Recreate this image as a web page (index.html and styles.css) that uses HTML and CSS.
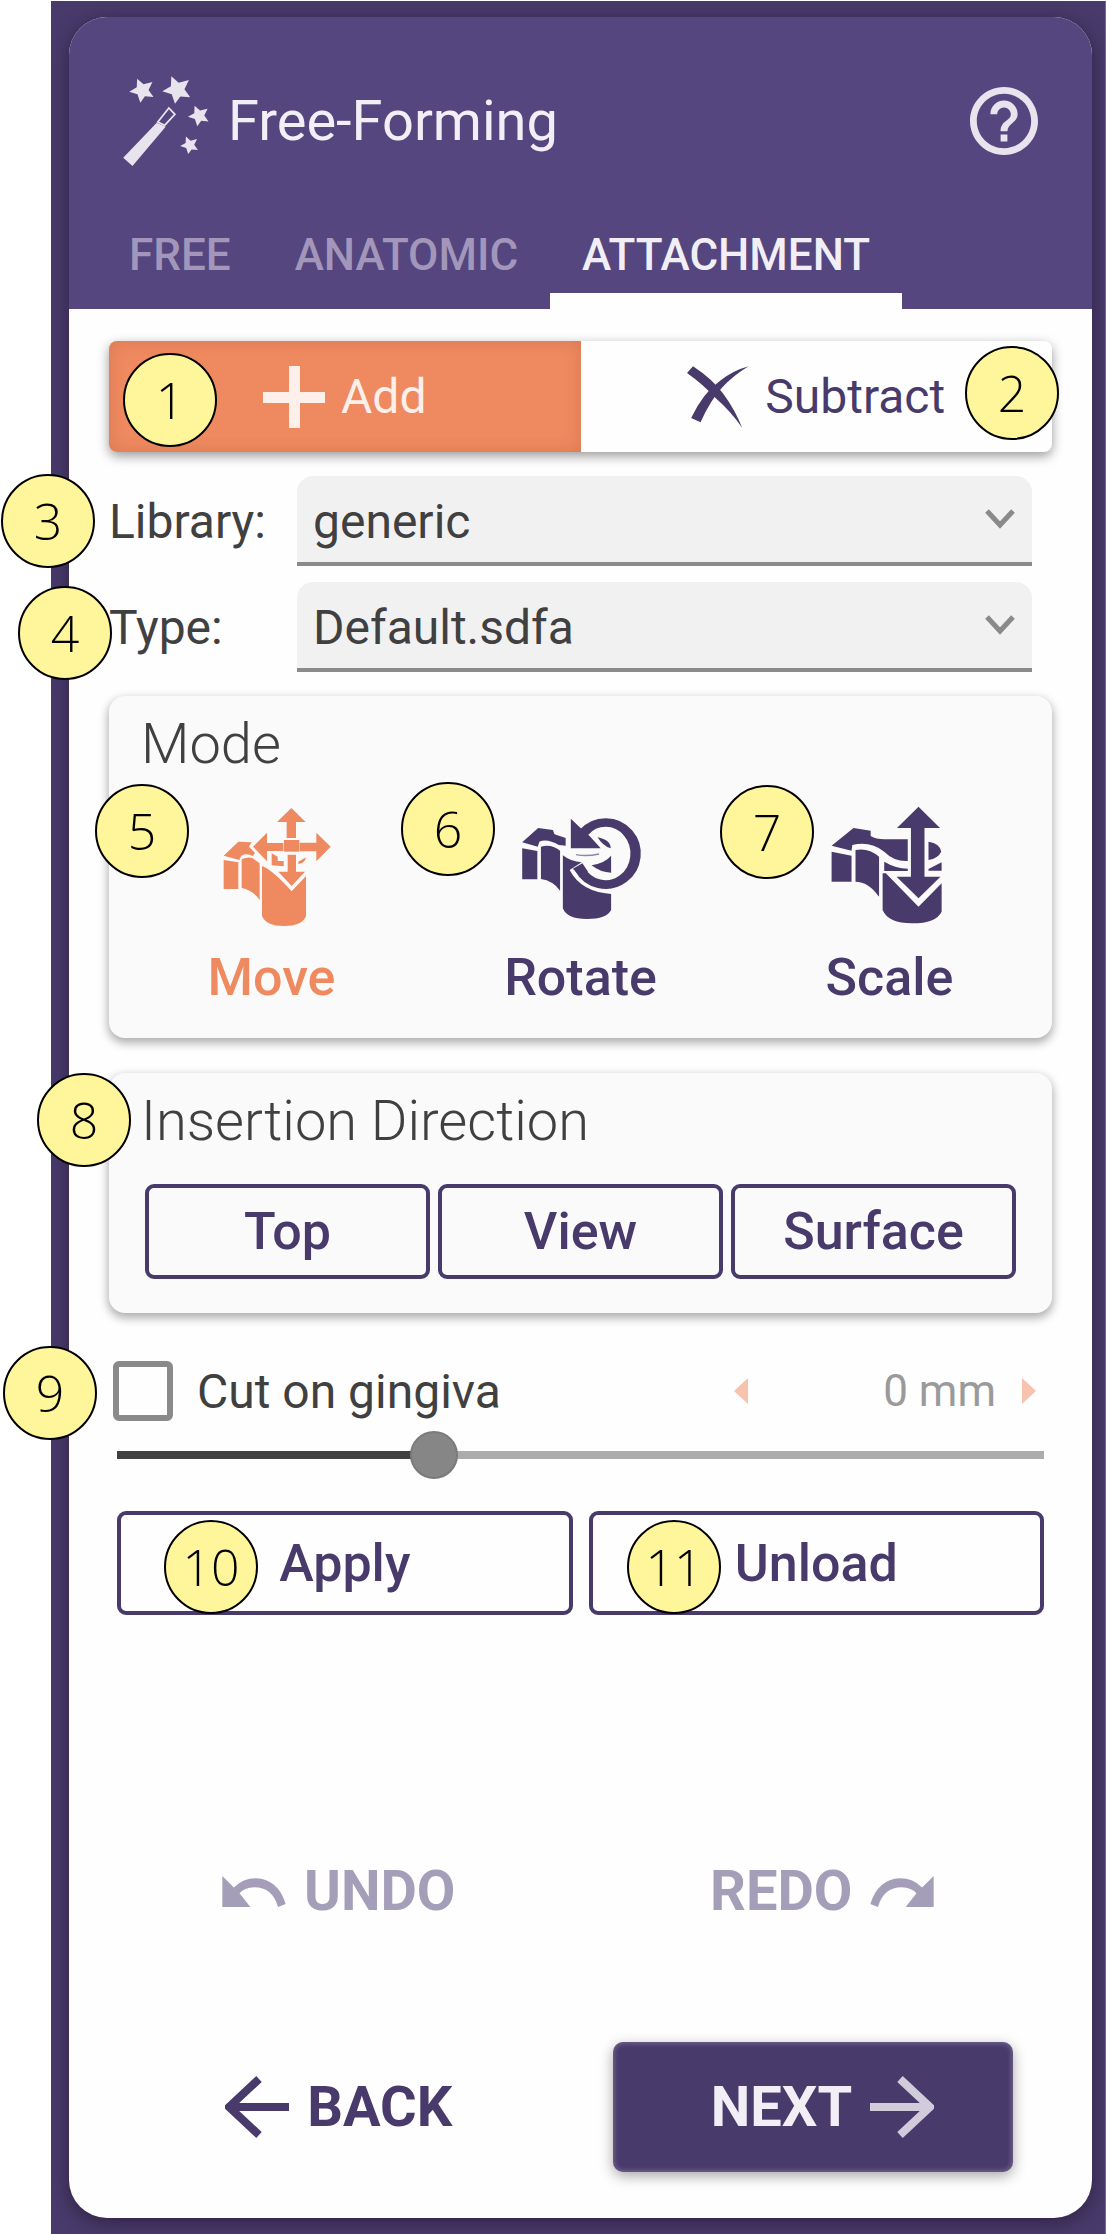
FILE: index.html
```
<!DOCTYPE html>
<html lang="en">
<head>
    <meta charset="UTF-8">
    <meta name="viewport" content="width=device-width, initial-scale=1.0">
    <title>Free-Forming</title>
    <link rel="stylesheet" href="styles.css">
</head>
<body>
    <div class="stage">
        <div class="panel">
            <header class="header">
                <div class="title-row">
                    <svg class="wand" viewBox="336 225 258 276" preserveAspectRatio="none" aria-hidden="true">
                        <defs>
                            <path id="star" d="M-14-36L4-19L29-26L18-2L32 19L8 17L-5 36L-13 11L-36 3L-15-10Z"/>
                        </defs>
                        <use href="#star" transform="translate(398 272)"/>
                        <use href="#star" transform="translate(496 270) scale(1.15)"/>
                        <use href="#star" transform="translate(557 348) scale(.85)"/>
                        <use href="#star" transform="translate(531 436) scale(.73)"/>
                        <path d="M345 473L439 368L464 380L371 498Z"/>
                        <path d="M473 324L490 343L461 376L442 366Z" fill="none" stroke="currentColor" stroke-width="5"/>
                    </svg>
                    <h1>Free-Forming</h1>
                    <button class="help" aria-label="Help">
                        <svg viewBox="2 2 20 20"><path d="M11 18h2v-2h-2v2zm1-16C6.48 2 2 6.48 2 12s4.48 10 10 10 10-4.48 10-10S17.52 2 12 2zm0 18c-4.41 0-8-3.59-8-8s3.59-8 8-8 8 3.59 8 8-3.59 8-8 8zm0-14c-2.21 0-4 1.79-4 4h2c0-1.1.9-2 2-2s2 .9 2 2c0 2-3 1.75-3 5h2c0-2.25 3-2.5 3-5 0-2.21-1.79-4-4-4z"/></svg>
                    </button>
                </div>
                <nav class="tabs">
                    <button class="tab">FREE</button>
                    <button class="tab">ANATOMIC</button>
                    <button class="tab active">ATTACHMENT</button>
                </nav>
            </header>

            <main class="content">
                <div class="toggle">
                    <button class="toggle-btn active">
                        <svg class="icon-op" viewBox="0 0 62 62"><path d="M26 0h11v26h25v11H37v25H26V37H0V26h26z"/></svg>
                        Add
                    </button>
                    <button class="toggle-btn">
                        <svg class="icon-op" viewBox="402 142 165 180" preserveAspectRatio="none"><path d="M402 162L418 143Q470 180 500 225Q530 270 549 322Q520 275 478 235Q445 195 402 162Z"/><path d="M413 293Q445 220 490 185Q525 155 566 143Q525 170 495 205Q465 240 438 305Z"/></svg>
                        Subtract
                    </button>
                    <span class="badge badge-1">1</span>
                    <span class="badge badge-2">2</span>
                </div>

                <div class="fields">
                    <div class="field">
                        <label for="library">Library:</label>
                        <div class="select-wrap">
                            <select id="library"><option>generic</option></select>
                            <svg class="chevron" viewBox="0 0 32 22"><path d="M3 3L16 17L29 3"/></svg>
                        </div>
                        <span class="badge badge-3">3</span>
                    </div>
                    <div class="field">
                        <label for="type">Type:</label>
                        <div class="select-wrap">
                            <select id="type"><option>Default.sdfa</option></select>
                            <svg class="chevron" viewBox="0 0 32 22"><path d="M3 3L16 17L29 3"/></svg>
                        </div>
                        <span class="badge badge-4">4</span>
                    </div>
                </div>

                <section class="card mode">
                    <h2>Mode</h2>
                    <div class="mode-list">
                        <button class="mode-btn active">
                            <svg viewBox="393 378 360 360" preserveAspectRatio="none">
                                <path d="M428 527L472 485L512 487L504 500L522 519L516 528Q496 518 481 527L475 540Z"/>
                                <path d="M428 540L472 547V627H428Z"/>
                                <path d="M482 538Q498 530 514 534L536 550V660Q515 630 482 624Z"/>
                                <path d="M543 558Q575 570 632 634L675 588V708Q665 738 608 738Q555 738 543 708Z"/>
                                <path d="M631 384L674 426H645V474H617V426H588Z"/>
                                <path d="M516 500L558 458V489H607V513H558V544Z"/>
                                <path d="M749 500L706 458V488H656V514H706V544Z"/>
                                <path d="M609 480H655V515H609Z"/>
                                <path d="M620 524H645V575H672L632 618L592 575H620Z"/>
                                <path d="M572 520L590 530V543H608V559L572 556Z"/>
                                <path d="M652 545L675 532Q672 550 652 552Z"/>
                            </svg>
                            Move
                        </button>
                        <button class="mode-btn">
                            <svg viewBox="100 378 301 360" preserveAspectRatio="none">
                                <path d="M103 487L143 444L180 450L184 463L212 474V497L195 495Q165 474 146 485L142 500Z"/>
                                <path d="M103 505L141 513V598H103Z"/>
                                <path d="M150 500Q175 490 198 512V632Q180 602 150 597Z"/>
                                <path d="M205 526Q225 545 252 547L222 570Q250 635 326 642V690Q315 717 265 717Q215 717 205 685Z"/>
                                <path d="M225 416L250 445L272 468L300 505H225Z"/>
                                <path d="M257 458A75 93 0 1 1 247 566" fill="none" stroke="currentColor" stroke-width="26"/>
                                <path d="M230 566L254 550L268 575L250 590Z"/>
                                <path d="M292 472Q325 480 325 505Q305 498 292 472Z"/>
                                <path d="M277 556Q312 548 326 527V578Q300 578 277 556Z"/>
                                <path d="M238 524Q265 530 296 522" fill="none" stroke="currentColor" stroke-width="4" opacity=".6"/>
                            </svg>
                            Rotate
                        </button>
                        <button class="mode-btn">
                            <svg viewBox="874 378 301 360" preserveAspectRatio="none">
                                <path d="M878 497L933 444L976 452V468Q990 478 1010 478H1069V543Q1035 545 1010 515Q975 482 930 495L928 512Z"/>
                                <path d="M878 515L928 527V605H878Z"/>
                                <path d="M938 510Q970 502 997 530V650Q970 605 938 605Z"/>
                                <path d="M1006 580H1014L1096 680L1154 610V695Q1140 730 1080 730Q1020 730 1006 690Z"/>
                                <path d="M1096 380L1150 444H1111V590H1151L1096 655L1041 590H1077V444H1042Z"/>
                                <path d="M1121 485Q1150 490 1153 515Q1145 535 1121 540Z"/>
                                <path d="M1121 567L1154 547V572H1121Z"/>
                                <path d="M1010 545Q1040 566 1069 566V573H1010Z"/>
                            </svg>
                            Scale
                        </button>
                    </div>
                    <span class="badge badge-5">5</span>
                    <span class="badge badge-6">6</span>
                    <span class="badge badge-7">7</span>
                </section>

                <section class="card insertion">
                    <h2>Insertion Direction</h2>
                    <div class="direction-list">
                        <button class="btn">Top</button>
                        <button class="btn">View</button>
                        <button class="btn">Surface</button>
                    </div>
                    <span class="badge badge-8">8</span>
                </section>

                <div class="gingiva">
                    <input type="checkbox" id="gingiva">
                    <label for="gingiva">Cut on gingiva</label>
                    <div class="stepper">
                        <button aria-label="Decrease"><svg viewBox="0 0 14 26"><path d="M14 0V26L0 13z"/></svg></button>
                        <input type="text" value="0 mm" aria-label="Cut distance">
                        <button aria-label="Increase"><svg viewBox="0 0 14 26"><path d="M0 0V26L14 13z"/></svg></button>
                    </div>
                    <span class="badge badge-9">9</span>
                </div>
                <input class="slider" type="range" min="0" max="300" value="100" aria-label="Cut distance slider">

                <div class="actions">
                    <button class="btn">Apply</button>
                    <button class="btn">Unload</button>
                    <span class="badge badge-10">10</span>
                    <span class="badge badge-11">11</span>
                </div>
            </main>

            <footer class="footer">
                <button class="nav-btn muted">
                    <svg class="icon-turn" viewBox="543 108 192 94"><path d="M543 108L578 143Q605 115 645 115Q712 118 735 193L712 202Q695 142 640 142Q610 143 595 160L628 202H543Z"/></svg>
                    UNDO
                </button>
                <button class="nav-btn muted">
                    REDO
                    <svg class="icon-turn flip" viewBox="543 108 192 94"><path d="M543 108L578 143Q605 115 645 115Q712 118 735 193L712 202Q695 142 640 142Q610 143 595 160L628 202H543Z"/></svg>
                </button>
                <button class="nav-btn">
                    <svg class="icon-arrow" viewBox="0 0 64 62"><path d="M64 31H4M34 3L4 31L34 59"/></svg>
                    BACK
                </button>
                <button class="nav-btn next">
                    NEXT
                    <svg class="icon-arrow" viewBox="0 0 64 62"><path d="M0 31H60M30 3L60 31L30 59"/></svg>
                </button>
            </footer>
        </div>
    </div>
</body>
</html>
```
FILE: styles.css
```
* {
    box-sizing: border-box;
}
body {
    margin: 0;
    padding: 1px 0 0 51px;
    background-color: white;
    font-family: Roboto, "Liberation Sans", sans-serif;
    font-size: 48px;
    color: #404040;
}
h1, h2 {
    margin: 0;
}
button {
    margin: 0;
    padding: 0;
    border: none;
    background: none;
    font: inherit;
    color: inherit;
    cursor: pointer;
}
svg {
    display: block;
    flex: none;
    fill: currentColor;
}
.stage {
    display: flex;
    min-height: calc(100vh - 1px);
    padding: 16px 13px 16px 18px;
    background-color: #483a6b;
    border-right: 1px solid #77699a;
}
.panel {
    flex: 1;
    display: flex;
    flex-direction: column;
    background-color: #fefefe;
    border-radius: 38px;
    box-shadow: 0 4px 18px rgba(32, 20, 40, 0.6);
}

/* Header */
.header {
    padding: 56px 54px 0 51px;
    background-color: #55467f;
    border-radius: 38px 38px 0 0;
    color: #f1eff5;
}
.title-row {
    display: flex;
    align-items: center;
    gap: 16px;
    height: 96px;
}
.title-row h1 {
    flex: 1;
    font-size: 56px;
    font-weight: 400;
}
.wand {
    width: 92px;
    height: 92px;
    color: #e7e4ee;
}
.help svg {
    width: 68px;
    height: 68px;
    color: #e7e4ee;
}
.tabs {
    display: flex;
    margin: 32px 0 0 -23px;
}
.tab {
    height: 108px;
    padding: 0 32px;
    font-size: 44px;
    font-weight: 500;
    color: #a297ba;
}
.tab.active {
    color: #f1eff5;
    box-shadow: inset 0 -16px #fefefe;
}

.content {
    padding: 32px 40px;
}

/* Add / Subtract */
.toggle {
    position: relative;
    display: flex;
    height: 111px;
    border-radius: 8px;
    box-shadow: 0 4px 12px rgba(0, 0, 0, 0.4);
}
.toggle-btn {
    flex: 1;
    display: flex;
    align-items: center;
    justify-content: center;
    gap: 16px;
    border-radius: 0 8px 8px 0;
    color: #483a6b;
}
.toggle-btn.active {
    background-color: #ef895f;
    border-radius: 8px 0 0 8px;
    box-shadow: inset 0 0 16px rgba(120, 60, 40, 0.2);
    color: #fdefea;
}
.icon-op {
    width: 62px;
    height: 62px;
}

/* Drop-downs */
.fields {
    display: flex;
    flex-direction: column;
    gap: 16px;
    margin: 24px 20px 24px 0;
}
.field {
    position: relative;
    display: flex;
    align-items: center;
}
.field label {
    width: 188px;
}
.select-wrap {
    position: relative;
    flex: 1;
}
.select-wrap select {
    display: block;
    width: 100%;
    height: 90px;
    padding: 0 64px 0 16px;
    border: none;
    border-radius: 16px 16px 0 0;
    appearance: none;
    background-color: #f1f1f1;
    box-shadow: inset 0 -4px #8a8a8a;
    font: inherit;
    color: inherit;
}
.chevron {
    position: absolute;
    top: 32px;
    right: 16px;
    width: 32px;
    height: 22px;
    fill: none;
    stroke: #8a8a8a;
    stroke-width: 5;
    pointer-events: none;
}

/* Cards */
.card {
    position: relative;
    padding-top: 16px;
    background-color: #fafafa;
    border-radius: 16px;
    box-shadow: 0 4px 10px 1px rgba(0, 0, 0, 0.32);
}
.card h2 {
    font-size: 56px;
    font-weight: 300;
    line-height: 64px;
}
.mode {
    padding-bottom: 32px;
}
.mode h2 {
    padding-left: 32px;
}
.mode-list {
    display: grid;
    grid-template-columns: repeat(3, 1fr);
    margin: 30px 8px 0;
}
.mode-btn {
    display: flex;
    flex-direction: column;
    align-items: center;
    gap: 24px;
    font-size: 52px;
    font-weight: 500;
    line-height: 56px;
    color: #483a6b;
}
.mode-btn.active {
    color: #ef895f;
}
.mode-btn svg {
    width: 120px;
    height: 120px;
    overflow: visible;
}
.insertion {
    margin-top: 35px;
    padding: 16px 36px 34px;
}
.insertion h2 {
    margin-left: -4px;
}
.direction-list {
    display: grid;
    grid-template-columns: repeat(3, 1fr);
    gap: 8px;
    margin-top: 31px;
}
.btn {
    height: 95px;
    border: 4px solid #483a6b;
    border-radius: 9px;
    font-size: 52px;
    font-weight: 500;
    color: #483a6b;
}

/* Cut on gingiva */
.gingiva {
    position: relative;
    display: flex;
    align-items: center;
    gap: 24px;
    margin-top: 48px;
    padding: 0 16px 0 4px;
}
.gingiva input[type="checkbox"] {
    width: 60px;
    height: 60px;
    margin: 0;
    border: 6px solid #8a8a8a;
    border-radius: 6px;
    appearance: none;
}
.stepper {
    display: flex;
    align-items: center;
    justify-content: space-between;
    width: 302px;
    margin-left: auto;
    color: #f7c3ae;
}
.stepper svg {
    width: 14px;
    height: 26px;
}
.stepper input {
    width: 200px;
    margin-left: auto;
    margin-right: 26px;
    padding: 0;
    border: none;
    background: none;
    font: inherit;
    font-size: 44px;
    text-align: right;
    color: #9a9a9a;
}
.slider {
    display: block;
    width: calc(100% - 16px);
    height: 48px;
    margin: 10px 8px 32px;
    appearance: none;
    background: linear-gradient(#404040, #404040) left / 34% 8px no-repeat,
                linear-gradient(#acacac, #acacac) center / 100% 8px no-repeat;
}
.slider::-webkit-slider-thumb {
    width: 48px;
    height: 48px;
    border: 2px solid #7b7b7b;
    border-radius: 50%;
    appearance: none;
    background-color: #868686;
}
.actions {
    position: relative;
    display: grid;
    grid-template-columns: 1fr 1fr;
    gap: 16px;
    margin: 0 8px;
}
.actions .btn {
    height: 104px;
}

/* Undo / redo and wizard navigation */
.footer {
    display: grid;
    grid-template-columns: 1fr 1fr;
    align-items: center;
    row-gap: 115px;
    margin-top: auto;
    padding: 0 28px 46px;
}
.nav-btn {
    display: flex;
    align-items: center;
    justify-content: center;
    gap: 18px;
    height: 72px;
    font-size: 56px;
    font-weight: 700;
    color: #483a6b;
}
.nav-btn.muted {
    color: #a49eb8;
}
.nav-btn.next {
    width: 400px;
    height: 130px;
    margin-left: 32px;
    padding-left: 20px;
    background-color: #483a6b;
    border-radius: 10px;
    box-shadow: 0 4px 14px rgba(0, 0, 0, 0.35), inset 0 0 4px 2px rgba(255, 255, 255, 0.2);
    color: #f1eff5;
}
.next .icon-arrow {
    color: #d1ccdc;
}
.icon-turn {
    width: 64px;
    height: 31px;
}
.flip {
    transform: scaleX(-1);
}
.icon-arrow {
    width: 64px;
    height: 62px;
    fill: none;
    stroke: currentColor;
    stroke-width: 8;
}

/* Numbered callouts lying over the panel */
.badge {
    position: absolute;
    width: 94px;
    height: 94px;
    border: 2px solid black;
    border-radius: 50%;
    background-color: #fff59b;
    font-family: "Open Sans", Lato, sans-serif;
    font-size: 50px;
    font-weight: 300;
    line-height: 90px;
    text-align: center;
    color: black;
}
.badge-1 {
    left: 14px;
    top: 12px;
}
.badge-2 {
    right: -7px;
    top: 5px;
}
.badge-3 {
    left: -108px;
    top: -2px;
}
.badge-4 {
    left: -91px;
    top: 4px;
}
.badge-5 {
    left: -14px;
    top: 88px;
}
.badge-6 {
    left: 292px;
    top: 86px;
}
.badge-7 {
    left: 611px;
    top: 89px;
}
.badge-8 {
    left: -72px;
    top: 0;
}
.badge-9 {
    left: -106px;
    top: -15px;
}
.badge-10 {
    left: 47px;
    top: 9px;
}
.badge-11 {
    left: 510px;
    top: 9px;
}
```
